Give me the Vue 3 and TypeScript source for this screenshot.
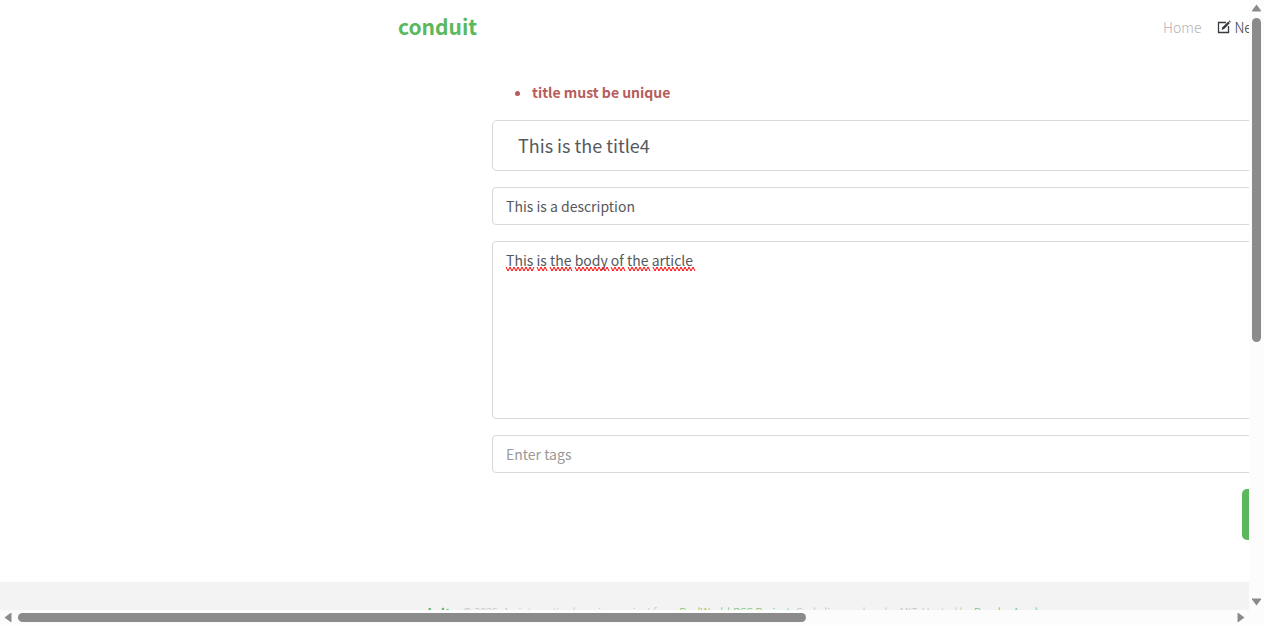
<script setup lang="ts">
import { ref } from 'vue'

const errors = ref<string[]>(['title must be unique'])
const title = ref('This is the title4')
const description = ref('This is a description')
const body = ref('This is the body of the article')
const tags = ref('')

interface Mark { x: number; w: number }
const marks: Mark[] = [
  { x: 0, w: 28 }, { x: 31, w: 10 }, { x: 44, w: 22 }, { x: 69, w: 34 },
  { x: 105, w: 14 }, { x: 122, w: 22 }, { x: 147, w: 42 },
]

function wave(m: Mark): string {
  let d = `M${m.x} 1`
  let down = true
  for (let x = m.x + 2; x <= m.x + m.w; x += 2) {
    d += `L${x} ${down ? 5 : 1}`
    down = !down
  }
  return d
}
</script>

<template>
  <div class="window">
    <div class="view">
      <div class="page">
        <header class="container navbar">
          <a class="brand" href="#">conduit</a>
          <nav class="nav">
            <a class="link" href="#">Home</a>
            <a class="link active" href="#">
              <svg class="compose" viewBox="0 0 14 14" aria-hidden="true">
                <path d="M9 2.5H1.5V12.5H11.5V6" fill="none" stroke="currentColor" stroke-width="1.3" />
                <path d="M4.6 9.9L5.4 7.2L11.3 1.4L12.9 3L7.2 8.9Z" fill="currentColor" />
                <path d="M11.8 0.9L12.4 0.3L14 1.9L13.4 2.5Z" fill="currentColor" />
              </svg>
              <span>New Article</span>
            </a>
          </nav>
        </header>
        <main class="container main">
          <div class="editor">
            <ul class="errors">
              <li v-for="e in errors" :key="e">{{ e }}</li>
            </ul>
            <form class="form" @submit.prevent>
              <input v-model="title" class="field large" type="text" aria-label="Article Title" />
              <input v-model="description" class="field" type="text" aria-label="Article description" />
              <div class="bodybox">
                <textarea v-model="body" class="field area" rows="8" spellcheck="false" aria-label="Article body"></textarea>
                <svg class="marks" viewBox="0 0 194 6" aria-hidden="true">
                  <path v-for="m in marks" :key="m.x" :d="wave(m)" />
                </svg>
              </div>
              <input v-model="tags" class="field" type="text" placeholder="Enter tags" aria-label="Tags" />
              <button class="publish" type="button">Publish Article</button>
            </form>
          </div>
        </main>
        <footer class="footer">
          <div class="container foot">
            <a class="footbrand" href="#">conduit</a>
            <span class="credit">© 2025. An interactive learning project from <a href="#">RealWorld OSS Project</a>. Code licensed under MIT. Hosted by <a href="#">Bondar Academy</a>.</span>
          </div>
        </footer>
      </div>
    </div>
    <div class="bar vertical" aria-hidden="true">
      <svg class="arrow" viewBox="0 0 9 8"><path d="M4.5 0.5L9 6.5V7.5H0V6.5Z" /></svg>
      <div class="track"><div class="thumb"></div></div>
      <svg class="arrow" viewBox="0 0 9 8"><path d="M0 0.5H9V1.5L4.5 7.5L0 1.5Z" /></svg>
    </div>
    <div class="bar horizontal" aria-hidden="true">
      <svg class="arrow side" viewBox="0 0 8 9"><path d="M0.5 4.5L6.5 0H7.5V9H6.5Z" /></svg>
      <div class="track"><div class="thumb"></div></div>
      <svg class="arrow side" viewBox="0 0 8 9"><path d="M0.5 0H1.5L7.5 4.5L1.5 9H0.5Z" /></svg>
    </div>
    <div class="corner"></div>
  </div>
</template>

<style>
body { margin: 0; }
</style>

<style scoped>
* { box-sizing: border-box; }
.window {
  display: grid;
  grid-template-columns: minmax(0, 1fr) 15px;
  grid-template-rows: minmax(0, 1fr) 15px;
  height: 100vh;
  overflow: hidden;
  background: #fff;
  color: #373a3c;
  font-family: "Source Sans Pro", "Noto Sans CJK SC", "Open Sans", sans-serif;
  font-size: 14px;
  line-height: 24px;
}
.view { overflow: hidden; }
.page { min-width: 1920px; }
.container { max-width: 1140px; margin: 0 auto; padding: 0 8px; }
a { text-decoration: none; }
.navbar { display: flex; justify-content: space-between; align-items: center; height: 54px; }
.brand { padding-bottom: 2px; color: #5cb85c; font-size: 21px; font-weight: 700; }
.nav { display: flex; gap: 16px; width: 359px; }
.link { display: flex; align-items: center; gap: 3px; color: #b3b3b3; font-weight: 300; white-space: nowrap; }
.active { color: #373a3c; }
.compose { width: 14px; height: 14px; }
.main { padding-top: 26px; }
.editor { margin: 0 94px; }
.errors { margin: 0 0 16px; padding-left: 40px; color: #b85c5c; font-weight: 700; }
.form { display: flex; flex-direction: column; gap: 16px; }
.field {
  display: block;
  width: 100%;
  height: 38px;
  margin: 0;
  padding: 6px 13px;
  border: 1px solid #d9d9d9;
  border-radius: 4px;
  background: #fff;
  color: #55595c;
  font-family: inherit;
  font-size: 14px;
  line-height: 24px;
  outline: none;
}
.field::placeholder { color: #999; opacity: 1; }
.large { height: 51px; padding: 11px 25px 13px; font-size: 18px; border-radius: 5px; }
.bodybox { position: relative; }
.area { height: 178px; resize: none; }
.marks { position: absolute; top: 25px; left: 14px; width: 194px; height: 6px; fill: none; stroke: #f00; stroke-width: 1; }
.publish {
  align-self: flex-end;
  width: 186px;
  height: 51px;
  border: 0;
  border-radius: 5px;
  background: #5cb85c;
  color: #fff;
  font-family: inherit;
  font-size: 18px;
}
.footer { margin-top: 42px; padding: 17px 0; background: #f3f3f3; }
.foot { display: flex; align-items: flex-start; gap: 12px; }
.footbrand { color: #5cb85c; font-size: 14px; font-weight: 700; line-height: 28px; }
.credit { color: #bbb; font-size: 11px; font-weight: 300; }
.credit a { color: #5cb85c; }
.bar { display: flex; align-items: center; background: #fcfcfc; }
.vertical { flex-direction: column; padding: 4px 0; }
.horizontal { padding: 0 4px; }
.arrow { width: 9px; height: 8px; fill: #8b8b8b; }
.side { width: 8px; height: 9px; }
.track { display: flex; flex: 1; }
.vertical .track { flex-direction: column; padding: 6px 0; }
.horizontal .track { padding: 0 6px; }
.thumb { border-radius: 5px; background: #8b8b8b; }
.vertical .thumb { width: 9px; height: 56.5%; }
.horizontal .thumb { width: 65%; height: 9px; }
.corner { background: #fcfcfc; }
</style>
